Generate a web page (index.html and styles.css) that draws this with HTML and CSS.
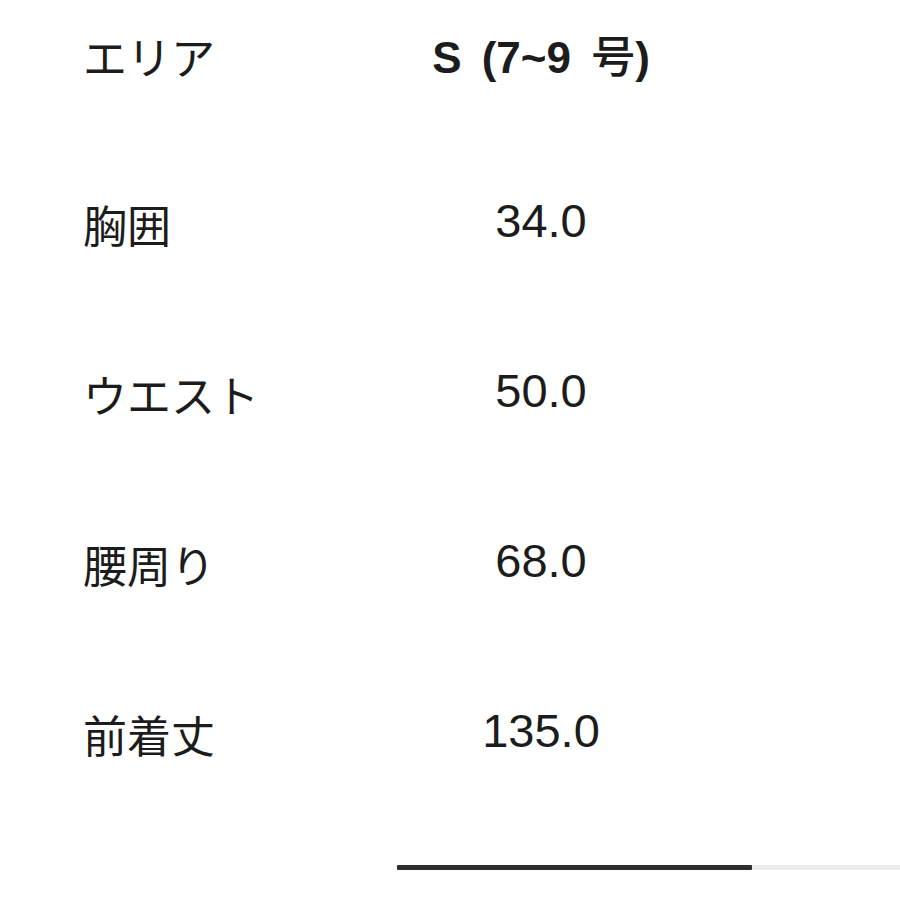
FILE: index.html
```html
<!DOCTYPE html>
<html lang="ja">
<head>
<meta charset="utf-8">
<link rel="stylesheet" href="styles.css">
</head>
<body>
<div class="page">
  <div class="table">
    <div class="row head">
      <div class="label">エリア</div>
      <div class="value">S (7~9 <span class="jp">号</span>)</div>
    </div>
    <div class="row">
      <div class="label">胸囲</div>
      <div class="value">34.0</div>
    </div>
    <div class="row">
      <div class="label">ウエスト</div>
      <div class="value">50.0</div>
    </div>
    <div class="row">
      <div class="label">腰周り</div>
      <div class="value">68.0</div>
    </div>
    <div class="row">
      <div class="label">前着丈</div>
      <div class="value">135.0</div>
    </div>
  </div>
  <div class="scroll">
    <div class="thumb"></div>
  </div>
</div>
</body>
</html>
```
FILE: styles.css
```css
html, body {
  margin: 0;
  padding: 0;
  background: #ffffff;
}
.page {
  width: 900px;
  height: 900px;
  position: relative;
  overflow: hidden;
  color: #1c1c1c;
}
.table {
  display: flex;
  flex-direction: column;
  gap: 110px;
  padding: 24px 0 0 83px;
}
.row {
  display: grid;
  grid-template-columns: 300px 316px;
  height: 60px;
  align-items: center;
}
.label {
  font-family: "Noto Sans CJK JP", sans-serif;
  font-size: 44px;
  line-height: 60px;
  font-weight: 400;
}
.value {
  font-family: "Liberation Sans", "Noto Sans CJK JP", sans-serif;
  font-size: 47px;
  line-height: 60px;
  text-align: center;
  font-weight: 400;
  padding-top: 0;
}
.row .value {
  position: relative;
  top: -3px;
}
.head .value {
  font-weight: 700;
  font-size: 44px;
  word-spacing: 8px;
  top: 0;
}
.head .jp {
  font-family: "Noto Sans CJK JP", sans-serif;
  font-weight: 500;
}
.scroll {
  position: absolute;
  left: 397px;
  top: 865px;
  width: 503px;
  height: 5px;
  background: #ececec;
}
.thumb {
  width: 355px;
  height: 5px;
  background: #2e2e2e;
  border-radius: 1px;
}
```
